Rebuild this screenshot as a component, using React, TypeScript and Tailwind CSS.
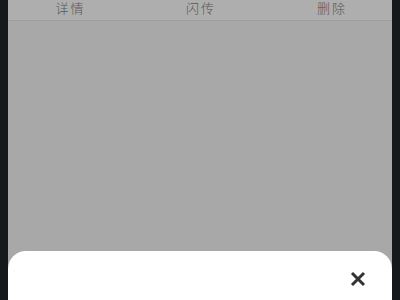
import React from "react";

export default function App() {
  return (
    <div className="w-[400px] h-[300px] bg-[#16191c] flex pl-[8px] pr-[8px] overflow-hidden">
      <div className="flex-1 flex flex-col bg-[#a9a8a9]">
        <div
          className="h-[21px] bg-[#afaeaf] border-b border-[#9f9e9f] grid grid-cols-3 text-[13px] font-light text-[#555555] leading-[16px]"
          style={{ fontFamily: '"Noto Sans CJK SC", "Noto Sans", sans-serif' }}
        >
          <div className="flex justify-center pr-[3px] tracking-[2px]">详情</div>
          <div className="flex justify-center pl-[2px] tracking-[2px]">闪传</div>
          <div className="flex justify-center pl-[8px] tracking-[2px]">删除</div>
        </div>
        <div className="flex-1" />
        <div className="h-[49px] bg-white rounded-t-[18px] flex justify-end pt-[20px] pr-[26px]">
          <svg width="16" height="16" viewBox="0 0 16 16" className="block">
            <path d="M2 2 L14 14 M14 2 L2 14" stroke="#333333" strokeWidth="3" strokeLinecap="butt" />
          </svg>
        </div>
      </div>
    </div>
  );
}
